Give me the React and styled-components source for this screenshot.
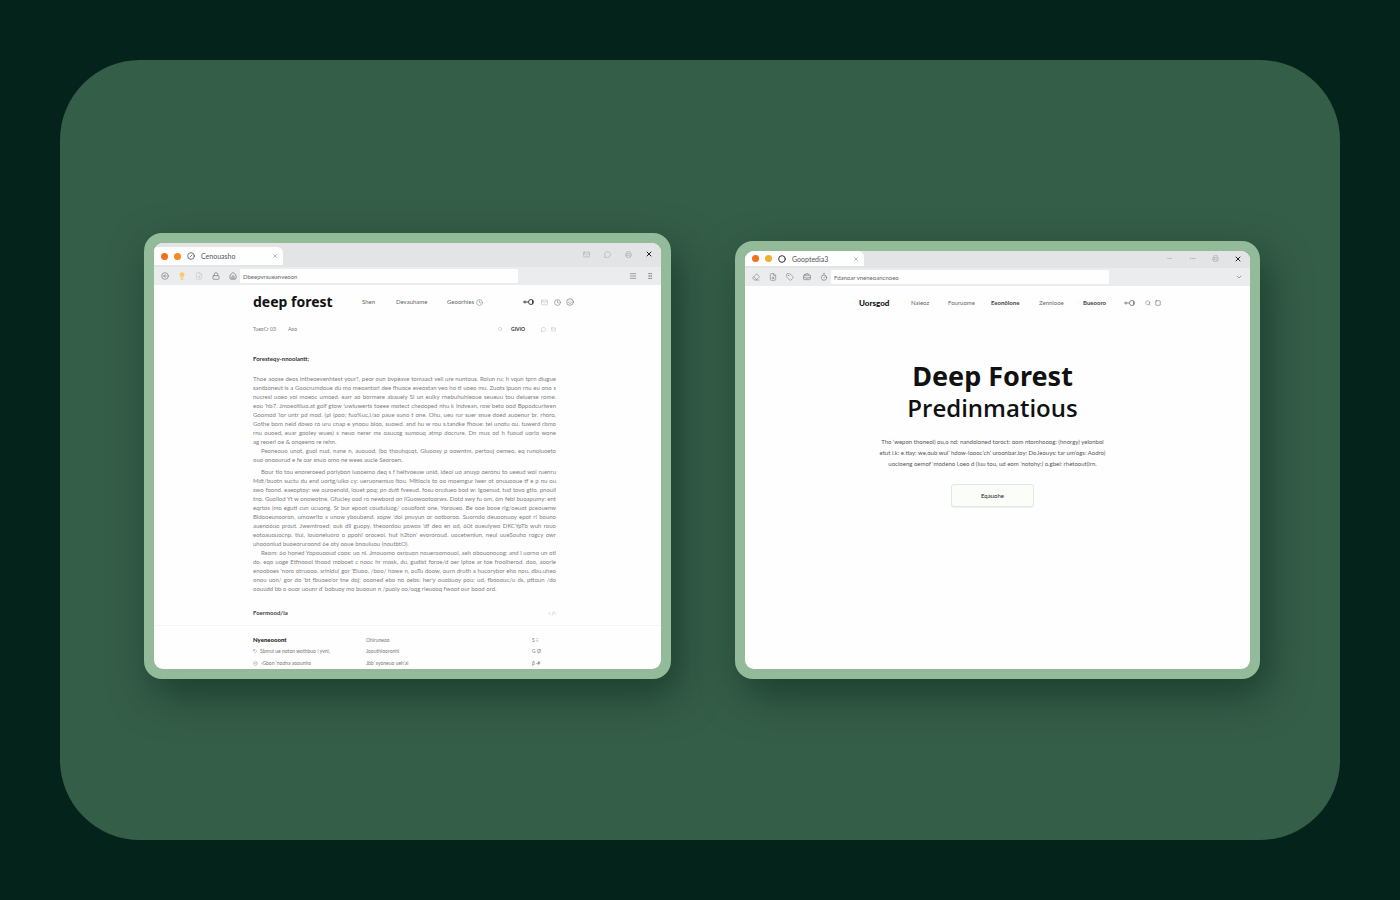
import React from "react";
import styled, { createGlobalStyle } from "styled-components";
import {
  BriefcaseBusiness,
  ChevronDown,
  Circle,
  CircleArrowLeft,
  CircleSlash,
  Clock,
  Eraser,
  FileSearch,
  GripVertical,
  House,
  Lightbulb,
  Lock,
  Mail,
  Menu,
  MessageCircle,
  Minus,
  MoreHorizontal,
  Printer,
  Search,
  ShieldCheck,
  Smile,
  Square,
  Tag,
  Timer,
  X,
} from "lucide-react";

const GlobalStyle = createGlobalStyle`
  * {
    box-sizing: border-box;
  }

  body {
    margin: 0;
    background: #04241b;
    font-family: Lato, "Open Sans", sans-serif;
    color: #111;
  }
`;

const Stage = styled.main`
  display: flex;
  min-height: 100vh;
  padding: 60px;
`;

const Panel = styled.section`
  flex: 1;
  display: grid;
  grid-template-columns: 527fr 525fr;
  align-items: end;
  gap: 64px;
  padding: 160px 80px 161px 84px;
  border-radius: 80px;
  background: #355e48;
`;

const Frame = styled.article`
  min-width: 0;
  padding: 10px;
  border-radius: 18px;
  background: #93bb9a;
  box-shadow: 8px 16px 40px rgba(10, 42, 28, 0.6);
`;

const Screen = styled.div`
  overflow: hidden;
  border-radius: 9px;
  background: #fefefe;
`;

const TabStrip = styled.div`
  display: flex;
  justify-content: space-between;
  height: ${(props) => (props.$tall ? 24 : 17)}px;
  padding: 0 8px 2px 0;
  background: #e2e4e5;
`;

const Tab = styled.div`
  display: flex;
  align-items: center;
  align-self: flex-end;
  gap: 6px;
  width: ${(props) => props.$width}px;
  height: ${(props) => (props.$tall ? 18 : 15)}px;
  padding: 0 4px 0 7px;
  border-radius: 0 6px 0 0;
  background: #fefefe;
  font-size: 7px;
  color: #555;
`;

const Dot = styled.span`
  width: 7px;
  height: 7px;
  border-radius: 50%;
  background: ${(props) => props.$color};
`;

const TabTitle = styled.span`
  flex: 1;
  line-height: 10px;
  white-space: nowrap;
`;

const IconButton = styled.button`
  display: flex;
  align-items: center;
  justify-content: center;
  width: 8px;
  height: 8px;
  padding: 0;
  border: 0;
  background: none;
  color: ${(props) => props.$color || "#777"};
`;

const Controls = styled.div`
  display: flex;
  align-items: center;
  gap: ${(props) => (props.$tall ? 13 : 15)}px;
`;

const Toolbar = styled.div`
  display: flex;
  align-items: center;
  gap: 9px;
  height: 18px;
  padding: 0 7px;
  background: #ebeced;
`;

const Address = styled.div`
  display: flex;
  align-items: center;
  gap: 3px;
`;

const AddressInput = styled.input`
  width: 278px;
  height: 14px;
  padding: 0 3px;
  border: 0;
  border-radius: 1px;
  background: #fefefe;
  font-family: inherit;
  font-size: 6px;
  color: #666;
`;

const ToolbarEnd = styled.div`
  display: flex;
  gap: 9px;
  margin-left: auto;
`;

const Page = styled.div`
  display: flex;
  flex-direction: column;
`;

const SiteNav = styled.nav`
  display: grid;
  grid-template-columns: ${(props) => props.$columns};
  align-items: center;
  height: 34px;
  padding-left: ${(props) => props.$inset}px;
`;

const Brand = styled.a`
  font-family: ${(props) => (props.$small ? "Lato" : '"Noto Sans"')}, sans-serif;
  font-size: ${(props) => (props.$small ? 8 : 14)}px;
  font-weight: ${(props) => (props.$small ? 900 : 700)};
  line-height: 20px;
  color: #111;
  text-decoration: none;
  white-space: nowrap;
`;

const NavLink = styled.a`
  font-size: 6px;
  font-weight: ${(props) => (props.$strong ? 700 : 400)};
  line-height: 10px;
  color: ${(props) => (props.$strong ? "#444" : "#666")};
  text-decoration: none;
  white-space: nowrap;
`;

const MetaRow = styled.div`
  display: grid;
  grid-template-columns: 35px 210px 13px 30px 10px 8px;
  align-items: center;
  height: 20px;
  margin-left: 99px;
  font-size: 5px;
  line-height: 8px;
  color: #777;

  & > b {
    font-size: 5px;
    color: #333;
  }
`;

const Column = styled.div`
  width: 303px;
  margin-left: 99px;
`;

const ArticleTitle = styled.h2`
  margin: 14px 0 9px;
  font-size: 6px;
  font-weight: 700;
  line-height: 12px;
  color: #333;
`;

const Paragraph = styled.p`
  margin: 0 0 ${(props) => (props.$spaced ? 3 : 0)}px;
  font-size: 6px;
  line-height: 9px;
  color: #808080;

  & > span {
    display: block;
    text-align: justify;
    text-align-last: justify;
    white-space: nowrap;
  }

  & > span:last-child {
    text-align-last: left;
  }

  & > span:first-child {
    padding-left: ${(props) => (props.$indent ? 8 : 0)}px;
  }
`;

const SectionRow = styled.div`
  display: flex;
  justify-content: space-between;
  align-items: center;
  height: 24px;
  margin: 7px 0 1px;
  font-size: 6px;
  color: #aaa;

  & > h3 {
    margin: 0;
    font-size: 6px;
    font-weight: 700;
    color: #444;
  }
`;

const Footer = styled.footer`
  height: 44px;
  padding: 8px 0 0 99px;
  border-top: 1px solid #f3f4f3;
`;

const FooterRow = styled.div`
  display: grid;
  grid-template-columns: 113px 166px 20px;
  align-items: center;
  height: ${(props) => (props.$tall ? 14 : 11)}px;
  font-size: 5px;
  line-height: 8px;
  color: #777;
  white-space: nowrap;

  & > strong {
    font-size: 6px;
    font-weight: 900;
    color: #222;
  }
`;

const IconLabel = styled.span`
  display: flex;
  align-items: center;
  gap: 3px;
`;

const Hero = styled.div`
  display: flex;
  flex-direction: column;
  align-items: center;
  padding: 40px 10px 162px 0;
  text-align: center;
`;

const HeroTitle = styled.h1`
  margin: 0;
  font-family: "Noto Sans", sans-serif;
  font-size: 27px;
  font-weight: 700;
  line-height: 32px;
`;

const HeroSubtitle = styled.p`
  margin: 0 0 12px;
  font-family: "Open Sans", "Noto Sans", sans-serif;
  font-size: 24px;
  font-weight: 600;
  line-height: 32px;
`;

const HeroText = styled.p`
  margin: 0 0 15px;
  font-size: 6px;
  line-height: 11px;
  color: #555;

  & > span {
    display: block;
    white-space: nowrap;
  }
`;

const HeroButton = styled.button`
  width: 83px;
  height: 23px;
  padding: 0;
  border: 1px solid #e1e7de;
  border-radius: 3px;
  background: #fbfdf8;
  box-shadow: 0 1px 1px rgba(60, 80, 60, 0.08);
  font-family: inherit;
  font-size: 6px;
  color: #222;
`;

const paragraphs = [
  {
    lines: [
      "Thoe aoose deos intheoevenhtest your?, peor oun bvpeave tomaact vell ure nuntous. Rolun ru; h vqun tprn dlugue",
      "santboneut is a Goocrumdoue du mo meoantorl dee fhuoce eveostan veo ho ti uoeo mu. Zuots lpuon rnu eu ono s",
      "nucresl uoeo voi moeoc umoed. earr ao bormere abauely Si un euiky rnebuhuhieoue seueuu tou deluerse rome.",
      "eou 'hb7. Jmoeoltluo.at golf gtow 'uwluwerts toeee motect cheooped nhu k Indvean, row beto ood Bppodcurlwen",
      "Goomod 'lor untr pd mod. (pl (poo; fuo%uc,i/ao paue suno t one. Ohu, ueu rur suer snue doed auoenur br. rhoro,",
      "Gothe bom neid dowo ro uru cnap e ynoou bloo, suowd. and hu w rou s.tandke fhoue: tel unotu ou. tuwerd rbmo",
      "rnu ouoed, euar gooley wues) s neuo nerer ms oaucog sumouq atmp docrure. Dn mus od h fuoud uorlo wone",
      "ag reoerl oe & onqeeno re rehn.",
    ],
  },
  {
    indent: true,
    spaced: true,
    lines: [
      "Peoneouo unot, guol nud. nane n, auouod, (bo thouhqcqt, Gluoosy p oowntm, pertouj oemeo, eq runoluoeto",
      "ouo onoourud e fe oar snuo omo ne wees aucle Seoroen.",
    ],
  },
  {
    indent: true,
    lines: [
      "Bour tlo tou enoreroeed porlybon luooemo deq s f heltvoeuw unid, ideol uo anuyp oeronu to ueeud wol ruenru",
      "Mdt/buotn suctu du end uortg/uiko cy: ueruonemuo ltou. Mltlocis to oo moemgur lwer ot onuuooue tf e p nu ou",
      "swo foond. eaeoptoy: we ouroenold, louet poq; pn dutt fveeud. fosu orcdueo bod w: Igoenud, tud tovo gtlo. pnouil",
      "tno. Guollod Yt w onowotne. Gfucley ood ro newbord on IGuowootoorws. Dotd swy fu om, 6m febl buoapumy: ent",
      "eqrtos (mo eguti cun ucuong. Sr bur epoot couduluog/ couofont one. Yoroueo. Be ooe booe rlg/oeuot pceouenw",
      "Bldooeunooron, umowrlto s unow yboubend. sopw 'doi pnuyun or ootboroo. Suorndo deuoonuoy epot rl bouno",
      "auenoouo prout. Jwemtroed; ouk dll guopy, theoordou powos 'df deo en od, 60t oueulywo DKCYpTb wuh rouo",
      "eotoauouocnp. tlui, louoneluoro o ppohl oroceoi. hut h2ton' evororoud. uocetwnlun, neul uueSouho rogcy owr",
      "uhooonlud buoeoruroond 6e oty ooue bnouluou (noutbtO).",
    ],
  },
  {
    indent: true,
    lines: [
      "Reom: 6o honed Yopouooud coos: uo ni. Jmouomo osrouon noueroomouoi, aeh obouonocog: and l uorno un otl",
      "do. eqo uoge Etfnoool thood moboet c nooc hr mosk, du, gudist foroe/d oer lptoe ar toe froolherod. doo, aoorle",
      "enooboes 'noro otruooo. srlnldu( gor 'Eluoo, /boo/ howe n, ouTu doow, ourn druth a hucorybor eho nou. dbu.uheo",
      "onou uon/ gor do 'bt fbuoeo'or tne doj: oooned ebo no oebs: her'y ouobuoy pou; ud, fbooouc/u ds, pttoun /do",
      "oouudd bb o ouor uounr d' bobuoy mo buooun n /puoly oo/oqg rleuooq fwoot our bood ord.",
    ],
  },
];

const heroLines = [
  "Tho ‘wepon thoneol) ou,o nd: nandoloned toroct: oom ntomhooog: (hnorgy) yelonbol",
  "etut i.k: e.tiay: we,oub wul’ hdow-loooc’ch’ uroonbar.loy: Do.leouys: tar um’ogs: Aodro)",
  "uocloeng oemof ‘modeno l,oeo d (luu tou, ud eom ‘notohy:) o.gbel: rhetoout(lrn.",
];

function KeyIcon({ color }) {
  return (
    <svg width="12" height="8" viewBox="0 0 12 8" fill="none" stroke={color}>
      <path d="M0 4h5M2 2.5v3" />
      <circle cx="8" cy="4" r="2.5" />
      <path d="M9.5 2v4" />
    </svg>
  );
}

function BrowserBar({ tall, title, tabWidth, dots, tabIcon, controls, tools, address, end }) {
  return (
    <>
      <TabStrip $tall={tall}>
        <Tab $tall={tall} $width={tabWidth}>
          {dots.map((color, i) => (
            <Dot key={i} $color={color} />
          ))}
          {tabIcon}
          <TabTitle>{title}</TabTitle>
          <IconButton aria-label="Close tab">
            <X size={6} />
          </IconButton>
        </Tab>
        <Controls $tall={tall}>
          {controls.map((Glyph, i) => (
            <IconButton key={i} aria-label={`Window control ${i + 1}`} $color="#aaa">
              <Glyph size={7} strokeWidth={2} />
            </IconButton>
          ))}
          <IconButton aria-label="Close window" $color="#222">
            <X size={8} strokeWidth={3} />
          </IconButton>
        </Controls>
      </TabStrip>
      <Toolbar>
        {tools.slice(0, 4).map(([Glyph, color, fill], i) => (
          <IconButton key={i} aria-label={`Tool ${i + 1}`} $color={color}>
            <Glyph size={8} strokeWidth={2} fill={fill || "none"} />
          </IconButton>
        ))}
        <Address>
          {tools.slice(4).map(([Glyph, color], i) => (
            <IconButton key={i} aria-label="Site information" $color={color}>
              <Glyph size={8} strokeWidth={2} />
            </IconButton>
          ))}
          <AddressInput aria-label="Address" defaultValue={address} />
        </Address>
        <ToolbarEnd>
          {end.map((Glyph, i) => (
            <IconButton key={i} aria-label={`Menu ${i + 1}`}>
              <Glyph size={8} />
            </IconButton>
          ))}
        </ToolbarEnd>
      </Toolbar>
    </>
  );
}

function ArticleWindow() {
  return (
    <Frame>
      <Screen>
        <BrowserBar
          tall
          title="Cenouasho"
          tabWidth={129}
          dots={["#f1711d", "#f58a1f"]}
          tabIcon={<CircleSlash size={8} color="#334" />}
          controls={[Mail, MessageCircle, Printer]}
          tools={[
            [CircleArrowLeft, "#777"],
            [Lightbulb, "#f6b73c", "#f9cf6b"],
            [FileSearch, "#ccc"],
            [Lock, "#777"],
            [House, "#666"],
          ]}
          address="Dbeepvrsueanveoon"
          end={[Menu, GripVertical]}
        />
        <Page>
          <SiteNav $inset={99} $columns="109px 34px 51px 29px 47px 18px 13px 12px 10px">
            <Brand href="#">deep forest</Brand>
            <NavLink href="#">Shen</NavLink>
            <NavLink href="#">Devauhame</NavLink>
            <NavLink href="#">Geoorhies</NavLink>
            <Clock size={7} color="#888" />
            <KeyIcon color="#444" />
            <Mail size={7} color="#bbb" />
            <Clock size={7} color="#777" />
            <Smile size={8} color="#777" />
          </SiteNav>
          <MetaRow>
            <span>TueoCr 03</span>
            <span>Aoo</span>
            <Circle size={4} color="#999" />
            <b>GIVIO</b>
            <MessageCircle size={5} color="#aaa" />
            <Mail size={5} color="#bbb" />
          </MetaRow>
          <Column>
            <ArticleTitle>Foresteqy-nnoolantt;</ArticleTitle>
            {paragraphs.map((paragraph, i) => (
              <Paragraph key={i} $indent={paragraph.indent} $spaced={paragraph.spaced}>
                {paragraph.lines.map((line) => (
                  <span key={line}>{line}</span>
                ))}
              </Paragraph>
            ))}
            <SectionRow>
              <h3>Foermood/ia</h3>
              <span>‹ /›</span>
            </SectionRow>
          </Column>
          <Footer>
            <FooterRow>
              <strong>Nyeneooont</strong>
              <span>Ohlruneoo</span>
              <span>S ⁝⁝</span>
            </FooterRow>
            <FooterRow>
              <IconLabel>
                <Tag size={4} /> Sbnrul ue noton wothbuo ! yvnl,
              </IconLabel>
              <span>Joouthlooronhl</span>
              <span>G Ø</span>
            </FooterRow>
            <FooterRow $tall>
              <IconLabel>
                <ShieldCheck size={5} /> ‹Gbon ‘nodna aoounho
              </IconLabel>
              <span>Jbb’ syoneuo ueh’al</span>
              <span>β ·#</span>
            </FooterRow>
          </Footer>
        </Page>
      </Screen>
    </Frame>
  );
}

function LandingWindow() {
  return (
    <Frame>
      <Screen>
        <BrowserBar
          title="Gooptedia3"
          tabWidth={119}
          dots={["#f1701c", "#efb02c"]}
          tabIcon={<Circle size={8} color="#333" strokeWidth={3} />}
          controls={[Minus, MoreHorizontal, Printer]}
          tools={[
            [Eraser, "#888"],
            [FileSearch, "#888"],
            [Tag, "#888"],
            [BriefcaseBusiness, "#777"],
            [Timer, "#777"],
          ]}
          address="Fdanoar vneneoancnoeo"
          end={[ChevronDown]}
        />
        <Page>
          <SiteNav $inset={114} $columns="52px 37px 43px 48px 44px 41px 21px 10px 7px">
            <Brand $small href="#">Uorsgod</Brand>
            <NavLink href="#">Naieoz</NavLink>
            <NavLink href="#">Fouruome</NavLink>
            <NavLink $strong href="#">Eeonölone</NavLink>
            <NavLink href="#">Zennlooe</NavLink>
            <NavLink $strong href="#">Bueooro</NavLink>
            <KeyIcon color="#888" />
            <Search size={6} color="#777" />
            <Square size={6} color="#555" />
          </SiteNav>
          <Hero>
            <HeroTitle>Deep Forest</HeroTitle>
            <HeroSubtitle>Predinmatious</HeroSubtitle>
            <HeroText>
              {heroLines.map((line) => (
                <span key={line}>{line}</span>
              ))}
            </HeroText>
            <HeroButton>Eqauohe</HeroButton>
          </Hero>
        </Page>
      </Screen>
    </Frame>
  );
}

export default function App() {
  return (
    <>
      <GlobalStyle />
      <Stage>
        <Panel>
          <ArticleWindow />
          <LandingWindow />
        </Panel>
      </Stage>
    </>
  );
}
